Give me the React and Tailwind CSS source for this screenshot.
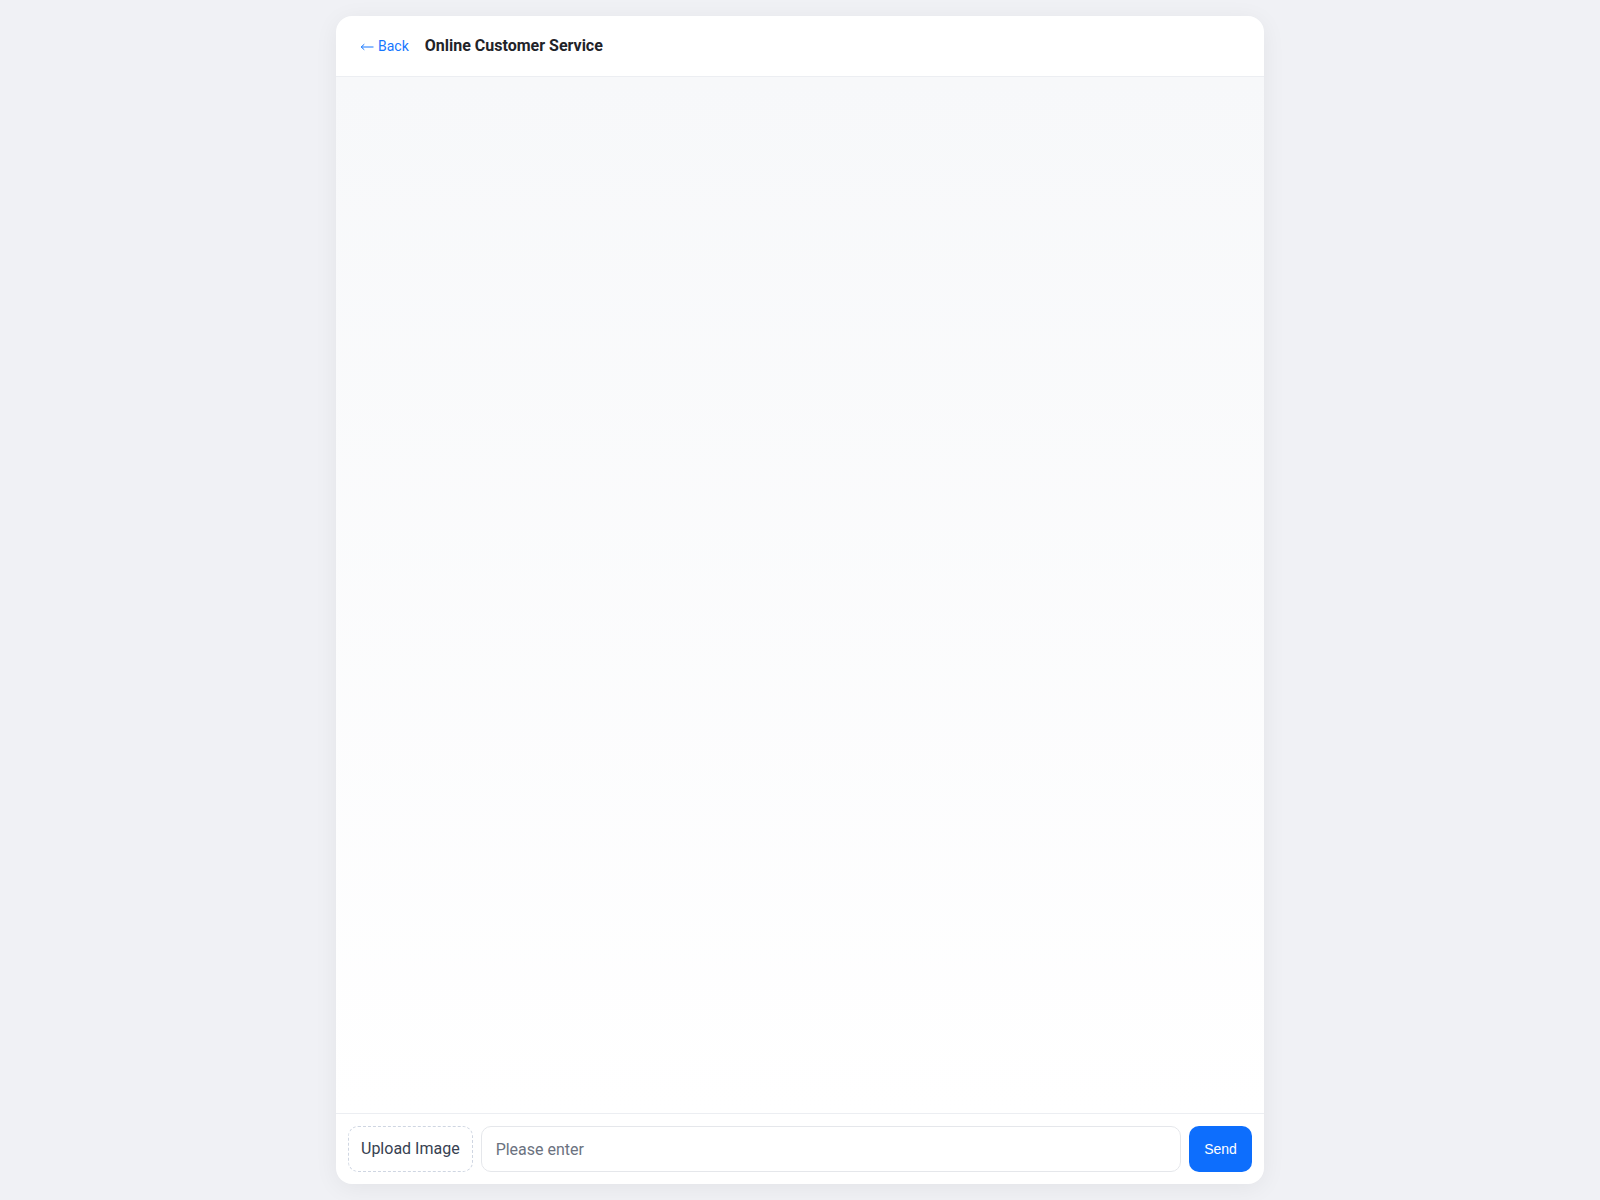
import React, { useState } from 'react'

const App = () => {
  const [text, setText] = useState('')

  return (
    <div className="min-h-screen bg-[#f0f1f5] p-4 font-['Roboto',sans-serif]">
      <div className="mx-auto flex h-[1168px] max-w-[928px] flex-col overflow-hidden rounded-2xl bg-white shadow-[0_4px_24px_rgba(0,0,0,0.06)]">
        <div className="flex h-[61px] shrink-0 items-center gap-4 border-b border-[#eceef2] px-6">
          <button className="flex items-center gap-1 text-sm text-[#1677ff]">
            <svg width="14" height="8" viewBox="0 0 14 8" fill="none" stroke="currentColor" strokeWidth="1" className="mt-[2px]">
              <path d="M13.5 4H1.2M4.3 1.2L1.2 4l3.1 2.8" />
            </svg>
            Back
          </button>
          <h1 className="text-base font-bold text-[#1f2329]">Online Customer Service</h1>
        </div>

        <div className="flex-1 bg-gradient-to-b from-[#f7f8fa] to-white" />

        <div className="flex shrink-0 items-center gap-2 border-t border-[#eceef2] p-3">
          <button className="h-[46px] rounded-[10px] border border-dashed border-[#cfd6e2] px-3 text-base text-[#374151]">
            Upload Image
          </button>
          <input
            value={text}
            onChange={(e) => setText(e.target.value)}
            placeholder="Please enter"
            className="h-[46px] flex-1 rounded-[10px] border border-[#e5e7eb] px-[14px] text-base text-[#1f2329] outline-none placeholder:text-[#6b7280]"
          />
          <button className="h-[46px] w-[63px] rounded-[10px] bg-[#0d6efd] font-['Liberation_Sans',sans-serif] text-sm text-white">
            Send
          </button>
        </div>
      </div>
    </div>
  )
}

export default App
